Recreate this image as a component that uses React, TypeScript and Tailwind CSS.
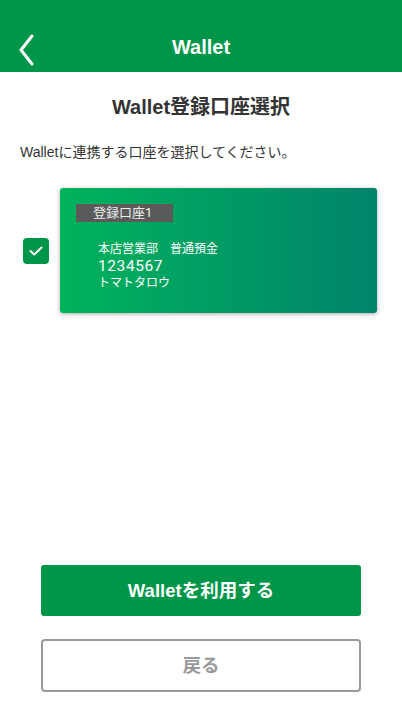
import React, { useState } from "react";

const App = () => {
  const [checked, setChecked] = useState(true);

  return (
    <div
      className="flex min-h-[714px] w-full flex-col bg-white"
      style={{ fontFamily: '"Liberation Sans", "Noto Sans CJK JP", sans-serif' }}
    >
      {/* header */}
      <header className="relative flex h-[72px] items-center justify-center bg-[#00964a] pt-[22px]">
        <button className="absolute left-[14px] top-[30px] p-1" aria-label="back">
          <svg width="16" height="32" viewBox="0 0 16 32" fill="none">
            <path d="M14 2 L3 16 L14 30" stroke="white" strokeWidth="3" strokeLinecap="round" strokeLinejoin="round" />
          </svg>
        </button>
        <h1 className="text-[20px] font-bold text-white">Wallet</h1>
      </header>

      <h2 className="mt-[22px] text-center text-[20px] font-bold leading-[26px] text-[#333]">Wallet登録口座選択</h2>
      <p className="mt-[22px] px-[20px] text-[14px] leading-[20px] text-[#333]">Walletに連携する口座を選択してください。</p>

      {/* account list */}
      <div className="mt-[26px] flex items-center pl-[23px] pr-[25px]">
        <button
          onClick={() => setChecked(!checked)}
          className={`flex h-[26px] w-[26px] shrink-0 items-center justify-center rounded-[4px] ${checked ? "bg-[#00964a]" : "border-2 border-[#999] bg-white"}`}
        >
          {checked && (
            <svg width="14" height="10" viewBox="0 0 14 10" fill="none">
              <path d="M1.5 5 L5.2 8.5 L12.5 1.5" stroke="white" strokeWidth="2" strokeLinecap="round" strokeLinejoin="round" />
            </svg>
          )}
        </button>
        <div
          className="ml-[11px] h-[125px] flex-1 rounded-[3px] bg-gradient-to-r from-[#00b35a] to-[#00846a] pl-[16px] pt-[16px] shadow-[0_1px_4px_rgba(0,0,0,0.35)]"
          style={{ fontFamily: 'Roboto, "Noto Sans CJK JP", sans-serif' }}
        >
          <div className="flex h-[18px] w-[97px] items-center bg-[#5a5a5a] pl-[17px] text-[13px] text-[#eee]">登録口座1</div>
          <div className="mt-[19px] pl-[22px] text-[12px] leading-[16.5px] text-white">
            <div>本店営業部　普通預金</div>
            <div className="text-[15.5px] leading-[17px] tracking-[0.6px]">1234567</div>
            <div>トマトタロウ</div>
          </div>
        </div>
      </div>

      <div className="flex-1" />

      {/* buttons */}
      <div className="flex flex-col gap-[23px] px-[41px] pb-[22px]">
        <button className="h-[51px] rounded-[3px] bg-[#00964a] text-[18.5px] font-bold text-white">Walletを利用する</button>
        <button className="h-[53px] rounded-[4px] border-2 border-[#9a9a9a] bg-white text-[18.5px] font-bold text-[#999]">戻る</button>
      </div>
    </div>
  );
};

export default App;
